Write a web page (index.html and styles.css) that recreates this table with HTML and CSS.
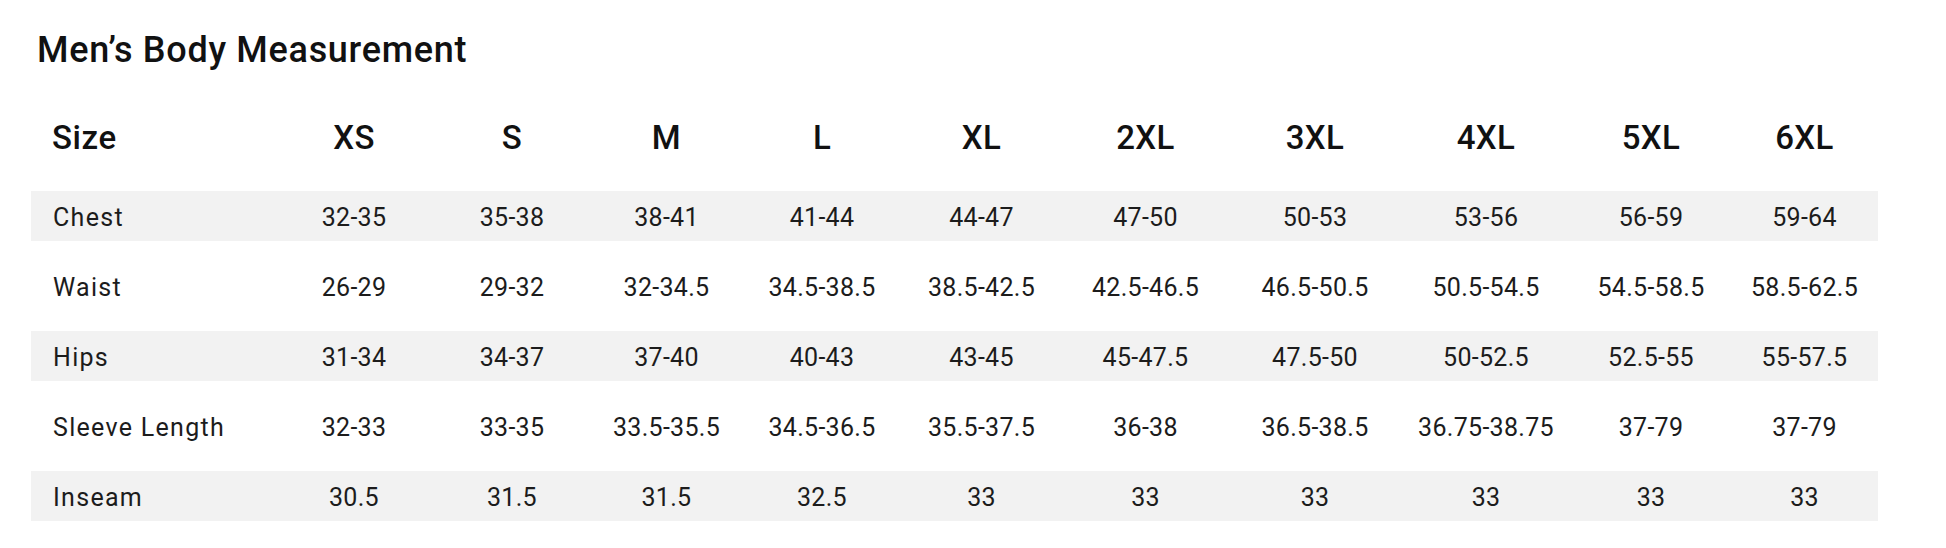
FILE: index.html
```html
<!DOCTYPE html>
<html lang="en">
<head>
<meta charset="utf-8">
<title>Men's Body Measurement</title>
<link rel="stylesheet" href="styles.css">
</head>
<body>
<main class="page">
  <h1 class="title">Men’s Body Measurement</h1>
  <div class="chart">
    <div class="row head">
      <div class="label">Size</div>
      <div class="cell">XS</div><div class="cell">S</div><div class="cell">M</div><div class="cell">L</div><div class="cell">XL</div><div class="cell">2XL</div><div class="cell">3XL</div><div class="cell">4XL</div><div class="cell">5XL</div><div class="cell">6XL</div>
    </div>
    <div class="row shade">
      <div class="label">Chest</div>
      <div class="cell">32-35</div><div class="cell">35-38</div><div class="cell">38-41</div><div class="cell">41-44</div><div class="cell">44-47</div><div class="cell">47-50</div><div class="cell">50-53</div><div class="cell">53-56</div><div class="cell">56-59</div><div class="cell">59-64</div>
    </div>
    <div class="row">
      <div class="label">Waist</div>
      <div class="cell">26-29</div><div class="cell">29-32</div><div class="cell">32-34.5</div><div class="cell">34.5-38.5</div><div class="cell">38.5-42.5</div><div class="cell">42.5-46.5</div><div class="cell">46.5-50.5</div><div class="cell">50.5-54.5</div><div class="cell">54.5-58.5</div><div class="cell">58.5-62.5</div>
    </div>
    <div class="row shade">
      <div class="label">Hips</div>
      <div class="cell">31-34</div><div class="cell">34-37</div><div class="cell">37-40</div><div class="cell">40-43</div><div class="cell">43-45</div><div class="cell">45-47.5</div><div class="cell">47.5-50</div><div class="cell">50-52.5</div><div class="cell">52.5-55</div><div class="cell">55-57.5</div>
    </div>
    <div class="row">
      <div class="label">Sleeve Length</div>
      <div class="cell">32-33</div><div class="cell">33-35</div><div class="cell">33.5-35.5</div><div class="cell">34.5-36.5</div><div class="cell">35.5-37.5</div><div class="cell">36-38</div><div class="cell">36.5-38.5</div><div class="cell">36.75-38.75</div><div class="cell">37-79</div><div class="cell">37-79</div>
    </div>
    <div class="row shade">
      <div class="label">Inseam</div>
      <div class="cell">30.5</div><div class="cell">31.5</div><div class="cell">31.5</div><div class="cell">32.5</div><div class="cell">33</div><div class="cell">33</div><div class="cell">33</div><div class="cell">33</div><div class="cell">33</div><div class="cell">33</div>
    </div>
  </div>
</main>
</body>
</html>
```

FILE: styles.css
```css
html, body {
  margin: 0;
  padding: 0;
  background: #ffffff;
}

.page {
  padding: 28px 0 0 31px;
  font-family: Roboto, "Liberation Sans", sans-serif;
  color: #111111;
}

.title {
  margin: 0 0 0 6px;
  font-size: 36px;
  line-height: 44px;
  font-weight: 500;
  letter-spacing: 0.7px;
  color: #111111;
}

.chart {
  width: 1847px;
  margin-top: 31px;
  display: flex;
  flex-direction: column;
  gap: 20px;
}

.row {
  display: grid;
  grid-template-columns: 243px 160px 156px 153px 158px 161px 167px 172px 170px 160px 147px;
  align-items: center;
  height: 50px;
  font-size: 25px;
  letter-spacing: 0.3px;
  color: #1c1c1c;
}

.row.shade {
  background: #f2f2f2;
}

.row.head {
  height: 68px;
  font-size: 33px;
  font-weight: 500;
  letter-spacing: 0.4px;
  color: #111111;
}

.label {
  padding-left: 22px;
  padding-top: 3px;
  letter-spacing: 1.3px;
  white-space: nowrap;
}

.head .label {
  padding-left: 21px;
  padding-top: 0;
  letter-spacing: 0.6px;
}

.cell {
  text-align: center;
  padding-top: 3px;
  white-space: nowrap;
}

.head .cell {
  padding-top: 0;
}
```
